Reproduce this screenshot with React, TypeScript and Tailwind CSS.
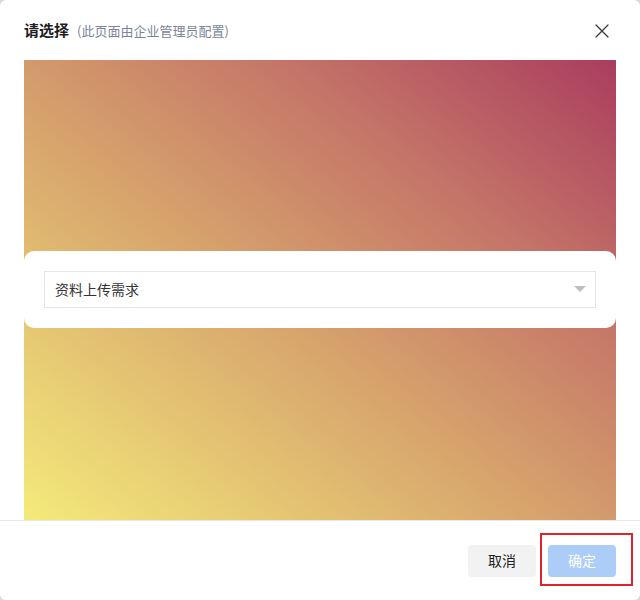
import React from "react";

const FONT = { fontFamily: '"Noto Sans CJK SC", "Liberation Sans", sans-serif' };

export default function App() {
  return (
    <div className="w-[640px] h-[600px] bg-[#d9d9d9]" style={FONT}>
      <div className="w-[640px] h-[600px] bg-white rounded-[6px] flex flex-col overflow-hidden">
        {/* header */}
        <div className="h-[60px] flex items-center justify-between pl-6 pr-[30px] shrink-0">
          <div className="flex items-baseline gap-[8px]">
            <span className="text-[15px] font-bold text-[#1f1f1f]">请选择</span>
            <span className="text-[13px] text-[#7a8599]">(此页面由企业管理员配置)</span>
          </div>
          <svg width="16" height="16" viewBox="0 0 16 16" className="mt-[1px]">
            <path d="M2 2 L14 14 M14 2 L2 14" stroke="#3a3a3a" strokeWidth="1.3" strokeLinecap="round" />
          </svg>
        </div>

        {/* body */}
        <div className="mx-6 h-[460px] shrink-0 flex items-center bg-[linear-gradient(to_top_right,#f4ea7a_0%,#d6a26c_45%,#c47468_72%,#aa3d5e_100%)]">
          <div className="w-full h-[77px] -mt-[1px] bg-white rounded-[10px] px-5 flex items-center">
            <div className="w-full h-[37px] border border-[#e6e6e6] flex items-center justify-between pl-[10px] pr-[9px]">
              <span className="text-[14px] text-[#333]">资料上传需求</span>
              <svg width="12" height="7" viewBox="0 0 12 7">
                <path d="M0 0 L12 0 L6 6 Z" fill="#bfbfbf" />
              </svg>
            </div>
          </div>
        </div>

        {/* footer */}
        <div className="flex-1 border-t border-[#e8e8e8] flex items-center justify-end gap-3 pr-6">
          <button className="w-[68px] h-8 rounded-[4px] bg-[#f2f2f2] text-[14px] text-[#222]">取消</button>
          <div className="relative">
            <button className="w-[68px] h-8 rounded-[4px] bg-[#abcdf8] text-[14px] text-white">确定</button>
            <div className="absolute left-[-8px] top-[-12px] w-[93px] h-[53px] border-2 border-[#e3212b]" />
          </div>
        </div>
      </div>
    </div>
  );
}
